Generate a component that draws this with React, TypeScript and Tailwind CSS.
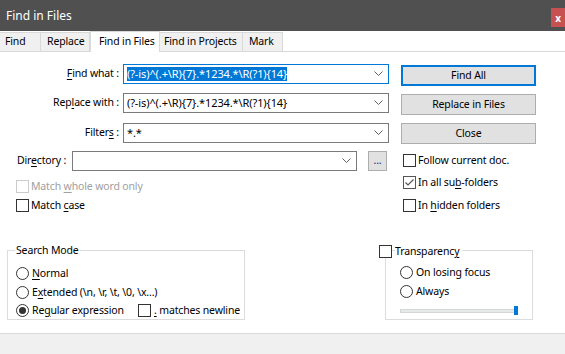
import React from "react";

const U = ({ children }: { children: React.ReactNode }) => (
  <span className="underline underline-offset-[2px]">{children}</span>
);

const Chevron = () => (
  <svg width="9" height="6" viewBox="0 0 9 6" className="shrink-0">
    <path d="M0.5 0.5 L4.5 4.5 L8.5 0.5" fill="none" stroke="#606060" strokeWidth="1" />
  </svg>
);

const Combo = ({
  width,
  focused,
  children,
}: {
  width: string;
  focused?: boolean;
  children?: React.ReactNode;
}) => (
  <div
    className={`${width} h-[20px] flex items-center border bg-white pl-[3px] pr-[5px] ${
      focused ? "border-[#0078d7]" : "border-[#7a7a7a]"
    }`}
  >
    <div className="flex-1 whitespace-nowrap overflow-hidden leading-[14px] text-[11px] tracking-[-0.1px]">{children}</div>
    <Chevron />
  </div>
);

const Check = ({ checked, disabled }: { checked?: boolean; disabled?: boolean }) => (
  <span
    className={`w-[13px] h-[13px] shrink-0 border bg-white flex items-center justify-center ${
      disabled ? "border-[#cccccc]" : checked ? "border-[#555555]" : "border-[#333333]"
    }`}
  >
    {checked && (
      <svg width="11" height="11" viewBox="0 0 11 11">
        <path d="M1.5 5.5 L4 8 L9.5 2.5" fill="none" stroke="#555555" strokeWidth="1.2" />
      </svg>
    )}
  </span>
);

const Radio = ({ checked }: { checked?: boolean }) => (
  <span className="w-[13px] h-[13px] shrink-0 rounded-full border border-[#333333] bg-white flex items-center justify-center">
    {checked && <span className="w-[7px] h-[7px] rounded-full bg-[#333333]" />}
  </span>
);

const Button = ({ children, focused }: { children: React.ReactNode; focused?: boolean }) => (
  <div
    className={`w-[135px] h-[21px] flex items-center justify-center bg-[#e1e1e1] ${
      focused ? "border-2 border-[#0078d7]" : "border border-[#adadad]"
    }`}
  >
    {children}
  </div>
);

const Tab = ({
  w,
  pl,
  children,
  selected,
}: {
  w: string;
  pl: string;
  children: React.ReactNode;
  selected?: boolean;
}) =>
  selected ? (
    <div className={`${w} ${pl} shrink-0 h-[21px] -mb-px bg-white border border-b-0 border-[#d9d9d9] flex items-center relative z-10`}>
      {children}
    </div>
  ) : (
    <div className={`${w} ${pl} shrink-0 h-[19px] bg-[#f0f0f0] border border-b-0 border-[#d9d9d9] -ml-px flex items-center`}>
      {children}
    </div>
  );

export default function App() {
  return (
    <div
      className="w-[565px] h-[354px] bg-white flex flex-col overflow-hidden text-[10.5px] tracking-[-0.15px] text-black whitespace-nowrap"
      style={{ fontFamily: '"Segoe UI", "Noto Sans", sans-serif' }}
    >
      {/* Title bar */}
      <div className="h-[31px] bg-[#505050] flex justify-between shrink-0">
        <div className="pl-[6px] text-white text-[12px] tracking-normal flex items-center">Find in Files</div>
        <div className="mt-[8px] w-[14px] h-[19px] bg-[#c75050] flex items-center justify-center text-white font-bold text-[10px] leading-none">
          x
        </div>
      </div>

      {/* Tabs */}
      <div className="h-[21px] flex items-end border-b border-[#d9d9d9] shrink-0">
        <Tab w="w-[42px]" pl="pl-[5px]">Find</Tab>
        <Tab w="w-[50px]" pl="pl-[6px]">Replace</Tab>
        <Tab w="w-[70px]" pl="pl-[8px]" selected>
          Find in Files
        </Tab>
        <Tab w="w-[84px]" pl="pl-[4px]">Find in Projects</Tab>
        <Tab w="w-[41px]" pl="pl-[6px]">Mark</Tab>
      </div>

      {/* Body */}
      <div className="flex-1 flex flex-col">
        <div className="h-[188px] flex shrink-0">
          {/* Left column */}
          <div className="w-[401px] flex flex-col">
            <div className="mt-[12px] flex items-center">
              <div className="w-[119px] text-right pr-0">
                <U>F</U>ind what :
              </div>
              <div className="ml-[4px]">
                <Combo width="w-[266px]" focused>
                  <span className="bg-[#0078d7] text-white">(?-is)^(.+\R){"{"}7{"}"}.*1234.*\R(?1){"{"}14{"}"}</span>
                </Combo>
              </div>
            </div>
            <div className="mt-[9px] flex items-center">
              <div className="w-[119px] text-right">
                Rep<U>l</U>ace with :
              </div>
              <div className="ml-[4px]">
                <Combo width="w-[266px]">(?-is)^(.+\R){"{"}7{"}"}.*1234.*\R(?1){"{"}14{"}"}</Combo>
              </div>
            </div>
            <div className="mt-[10px] flex items-center">
              <div className="w-[119px] text-right">
                Filter<U>s</U> :
              </div>
              <div className="ml-[4px]">
                <Combo width="w-[266px]">*.*</Combo>
              </div>
            </div>
            <div className="mt-[8px] flex items-center pl-[17px]">
              <div className="w-[55px]">
                Dir<U>e</U>ctory :
              </div>
              <Combo width="w-[285px]" />
              <div className="ml-[11px] w-[19px] h-[20px] bg-[#e1e1e1] border border-[#adadad] flex items-center justify-center text-[#1a1a6e] leading-none pb-[2px]">
                ...
              </div>
            </div>
            <div className="mt-[9px] flex items-center pl-[16px] gap-[2px] h-[13px] text-[#a0a0a0]">
              <Check disabled />
              <span>
                Match <U>w</U>hole word only
              </span>
            </div>
            <div className="mt-[6px] flex items-center pl-[16px] gap-[2px] h-[13px]">
              <Check />
              <span>
                Match <U>c</U>ase
              </span>
            </div>
          </div>

          {/* Right column */}
          <div className="w-[135px] flex flex-col">
            <div className="mt-[13px]">
              <Button focused>Find All</Button>
            </div>
            <div className="mt-[8px]">
              <Button>Replace in Files</Button>
            </div>
            <div className="mt-[8px]">
              <Button>Close</Button>
            </div>
            <div className="mt-[10px] flex items-center pl-[2px] gap-[2px] h-[13px]">
              <Check />
              <span>Follow current doc.</span>
            </div>
            <div className="mt-[9px] flex items-center pl-[2px] gap-[2px] h-[13px]">
              <Check checked />
              <span>
                In all su<U>b</U>-folders
              </span>
            </div>
            <div className="mt-[10px] flex items-center pl-[2px] gap-[2px] h-[13px]">
              <Check />
              <span>
                In <U>h</U>idden folders
              </span>
            </div>
          </div>
        </div>

        {/* Bottom groups */}
        <div className="flex items-start">
          <div className="ml-[7px] mt-[10px] w-[238px] shrink-0 h-[70px] border border-[#dcdcdc] relative flex flex-col pl-[8px]">
            <span className="absolute left-[7px] -top-[8px] bg-white px-px leading-[15px]">Search Mode</span>
            <div className="mt-[16px] flex items-center gap-[3px] h-[13px]">
              <Radio />
              <span>
                <U>N</U>ormal
              </span>
            </div>
            <div className="mt-[6px] flex items-center gap-[3px] h-[13px]">
              <Radio />
              <span>
                E<U>x</U>tended (\n, \r, \t, \0, \x...)
              </span>
            </div>
            <div className="mt-[5px] flex items-center h-[13px]">
              <div className="w-[122px] shrink-0 flex items-center gap-[3px]">
                <Radio checked />
                <span>
                  Re<U>g</U>ular expression
                </span>
              </div>
              <div className="flex items-center gap-[3px] shrink-0">
                <Check />
                <span>
                  <U>.</U> matches newline
                </span>
              </div>
            </div>
          </div>

          <div className="ml-[134px] mt-[5px] flex flex-col shrink-0">
            <div className="flex items-center gap-[3px] h-[13px] relative z-10">
              <Check />
              <span className="bg-white pr-[3px]">
                Transparenc<U>y</U>
              </span>
            </div>
            <div className="ml-[6px] -mt-[8px] w-[148px] h-[70px] border border-[#dcdcdc] flex flex-col pl-[14px]">
              <div className="mt-[15px] flex items-center gap-[3px] h-[13px]">
                <Radio />
                <span>On losing focus</span>
              </div>
              <div className="mt-[6px] flex items-center gap-[3px] h-[13px]">
                <Radio />
                <span>Always</span>
              </div>
              <div className="mt-[8px] w-[118px] h-[9px] relative flex items-center">
                <div className="w-full h-[4px] bg-[#e7eaea] border border-[#d6d6d6]" />
                <div className="absolute right-0 top-0 w-[4px] h-[9px] bg-[#0078d7]" />
              </div>
            </div>
          </div>
        </div>
      </div>

      {/* Status bar */}
      <div className="h-[21px] bg-[#f0f0f0] border-t border-[#dadada] shrink-0" />
    </div>
  );
}
